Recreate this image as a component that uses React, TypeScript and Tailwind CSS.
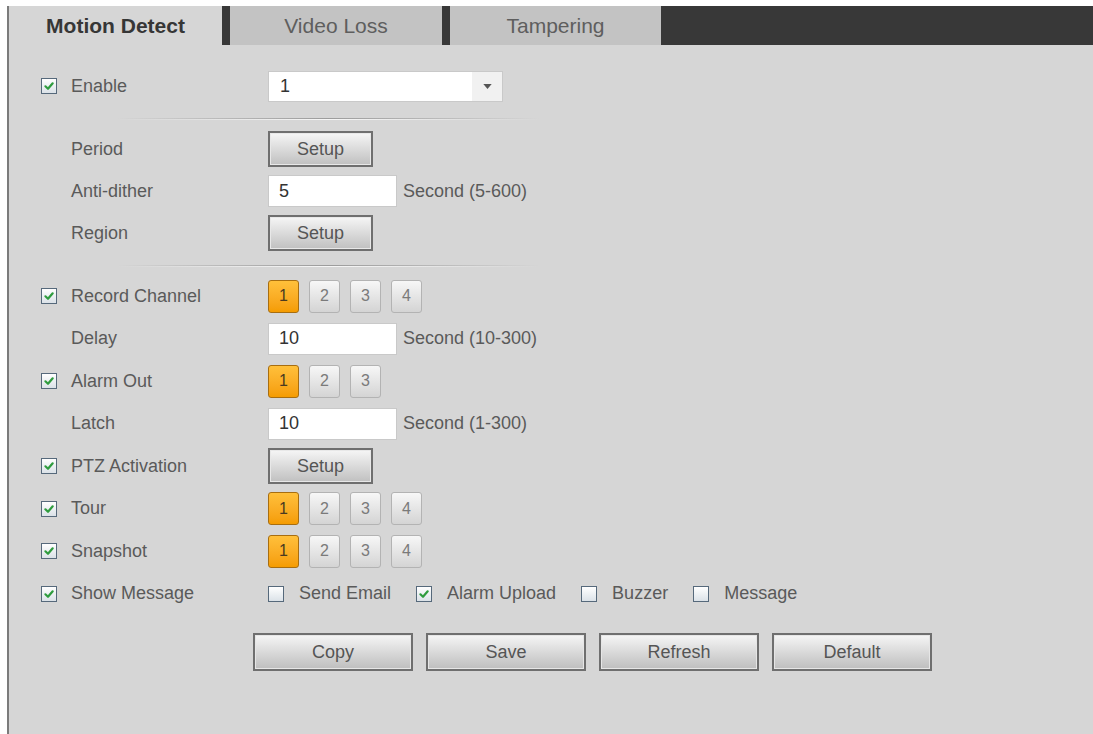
import type { ReactNode } from "react";

function Check({ checked = true, dim = false }: { checked?: boolean; dim?: boolean }) {
  return (
    <span
      className={`flex h-[16px] w-[16px] shrink-0 items-center justify-center border bg-linear-to-b from-white to-[#dbe2e8] ${
        dim ? "border-[#8d9ba7]" : "border-[#56697b]"
      }`}
    >
      {checked && (
        <svg viewBox="0 0 12 12" className="h-[12px] w-[12px]">
          <path d="M2.4 6.3 L5 8.8 L9.7 3.3" fill="none" stroke="#2e9c3e" strokeWidth="2.2" strokeLinecap="round" strokeLinejoin="round" />
        </svg>
      )}
    </span>
  );
}

function Row({ label, check, tall, children }: { label: string; check?: boolean; tall?: boolean; children: ReactNode }) {
  return (
    <div className={`flex items-center pl-[32px] ${tall ? "h-[42.5px]" : "h-[42px]"}`}>
      <div className="flex w-[227px] items-center">
        <div className="w-[30px]">{check && <Check />}</div>
        <span>{label}</span>
      </div>
      <div className="flex items-center">{children}</div>
    </div>
  );
}

function SetupButton() {
  return (
    <button className="h-[36px] w-[105px] border-2 border-[#6f6f6f] bg-linear-to-b from-[#f6f6f6] to-[#c0c0c0] text-[#555] shadow-[inset_0_0_0_1px_#e8e8e8]">
      Setup
    </button>
  );
}

function NumInput({ value, hint }: { value: string; hint: string }) {
  return (
    <>
      <div className="flex h-[32px] w-[129px] items-center border border-[#c9c9c9] bg-white pl-[10px] text-[#333]">{value}</div>
      <span className="ml-[6px]">{hint}</span>
    </>
  );
}

function Channels({ count }: { count: number }) {
  const items = Array.from({ length: count }, (_, i) => i + 1);
  return (
    <div className="flex gap-[10px]">
      {items.map((n) =>
        n === 1 ? (
          <span
            key={n}
            className="flex h-[33px] w-[31px] items-center justify-center rounded-[3px] border border-[#a86e10] bg-linear-to-b from-[#ffc03a] to-[#f59c00] text-[16px] text-[#4a3a20]"
          >
            {n}
          </span>
        ) : (
          <span
            key={n}
            className="flex h-[33px] w-[31px] items-center justify-center rounded-[3px] border border-[#b3b3b3] bg-linear-to-b from-[#f7f7f7] to-[#d4d4d4] text-[16px] text-[#7a7a7a]"
          >
            {n}
          </span>
        )
      )}
    </div>
  );
}

function Divider() {
  return (
    <div className="h-[21px] pt-[11px]">
      <div className="ml-[108px] h-px w-[422px] bg-linear-to-r from-[#d6d6d6] via-[#9c9c9c] to-[#d6d6d6]" />
      <div className="ml-[108px] h-px w-[422px] bg-linear-to-r from-[#d6d6d6] via-[#f6f6f6] to-[#d6d6d6]" />
    </div>
  );
}

function Option({ label, checked }: { label: string; checked?: boolean }) {
  return (
    <div className="flex items-center gap-[15px]">
      <Check checked={checked} />
      <span>{label}</span>
    </div>
  );
}

function BigButton({ label }: { label: string }) {
  return (
    <button className="h-[38px] w-[160px] border-2 border-[#6f6f6f] bg-linear-to-b from-[#f6f6f6] to-[#bebebe] text-[#555] shadow-[inset_0_0_0_1px_#e6e6e6]">
      {label}
    </button>
  );
}

export default function App() {
  return (
    <div className="min-h-screen bg-white pl-[7px] pt-[6px] font-['Liberation_Sans',Arial,sans-serif] text-[18px] text-[#5a5a5a]">
      <div className="min-h-[728px] border-l-2 border-[#7b7b7b] bg-[#d6d6d6]">
        {/* tabs */}
        <div className="flex h-[39px] gap-[8px] bg-[#383838] text-[21px]">
          <div className="flex w-[213px] items-center justify-center bg-[#d6d6d6] font-bold text-[#363636]">Motion Detect</div>
          <div className="flex w-[212px] items-center justify-center bg-[#c3c3c3] text-[#5e5e5e]">Video Loss</div>
          <div className="flex w-[211px] items-center justify-center bg-[#c3c3c3] text-[#5e5e5e]">Tampering</div>
        </div>

        <div className="pt-[20px]">
          <Row label="Enable" check>
            <div className="flex h-[31px] w-[235px] border border-[#c9c9c9] bg-white">
              <span className="flex flex-1 items-center pl-[11px] text-[#333]">1</span>
              <span className="flex w-[30px] items-center justify-center bg-[#f1f1f1]">
                <svg viewBox="0 0 10 6" className="h-[5px] w-[9px]">
                  <path d="M0 0 L10 0 L5 6 Z" fill="#555" />
                </svg>
              </span>
            </div>
          </Row>

          <Divider />

          <Row label="Period">
            <SetupButton />
          </Row>
          <Row label="Anti-dither">
            <NumInput value="5" hint="Second (5-600)" />
          </Row>
          <Row label="Region">
            <SetupButton />
          </Row>

          <Divider />

          <Row label="Record Channel" check tall>
            <Channels count={4} />
          </Row>
          <Row label="Delay" tall>
            <NumInput value="10" hint="Second (10-300)" />
          </Row>
          <Row label="Alarm Out" check tall>
            <Channels count={3} />
          </Row>
          <Row label="Latch" tall>
            <NumInput value="10" hint="Second (1-300)" />
          </Row>
          <Row label="PTZ Activation" check tall>
            <SetupButton />
          </Row>
          <Row label="Tour" check tall>
            <Channels count={4} />
          </Row>
          <Row label="Snapshot" check tall>
            <Channels count={4} />
          </Row>
          <Row label="Show Message" check tall>
            <div className="flex items-center gap-[25px]">
              <Option label="Send Email" checked={false} />
              <Option label="Alarm Upload" checked />
              <Option label="Buzzer" checked={false} />
              <Option label="Message" checked={false} />
            </div>
          </Row>

          <div className="mt-[18px] flex gap-[13px] pl-[244px]">
            <BigButton label="Copy" />
            <BigButton label="Save" />
            <BigButton label="Refresh" />
            <BigButton label="Default" />
          </div>
        </div>
      </div>
    </div>
  );
}
